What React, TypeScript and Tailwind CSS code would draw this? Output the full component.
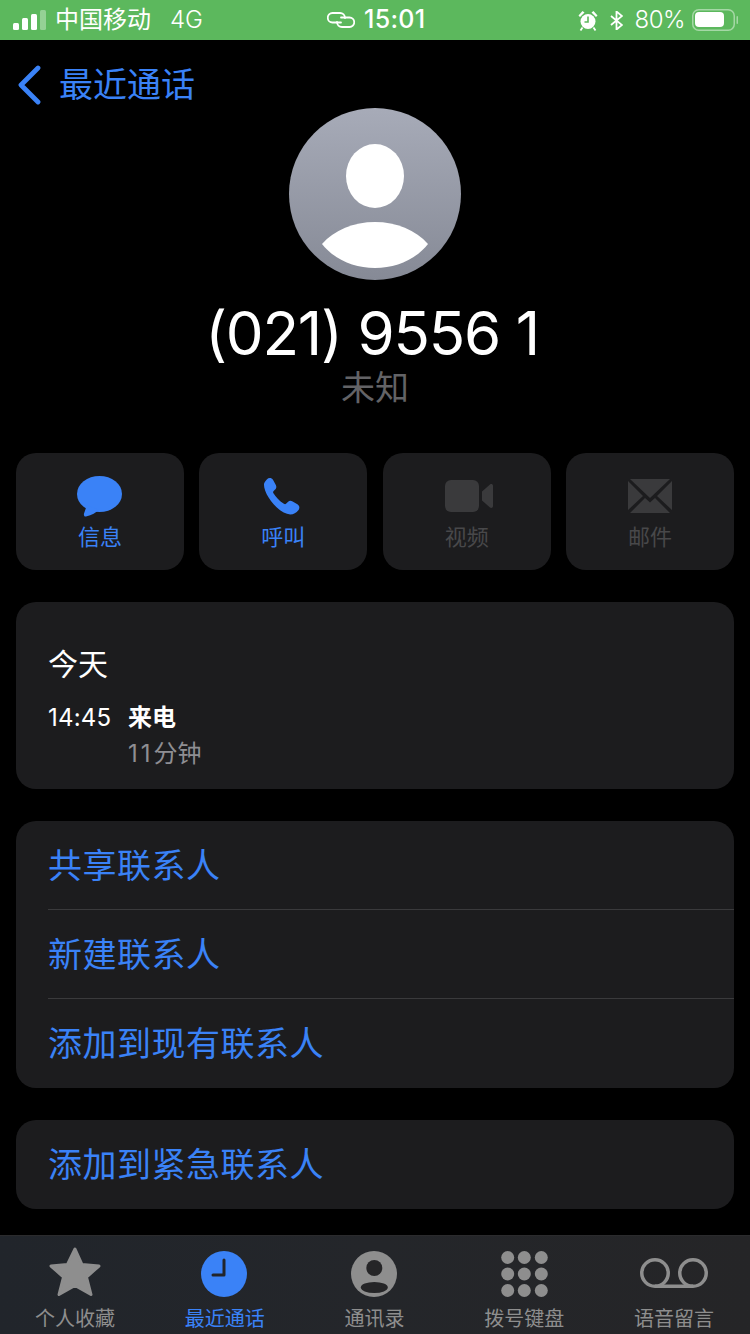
import React from "react";

const font = { fontFamily: '"Inter","Noto Sans CJK SC",sans-serif' };

function Signal() {
  return (
    <svg width="33" height="20" viewBox="0 0 33 20">
      <rect x="0" y="13" width="6" height="7" rx="1.5" fill="#fff" />
      <rect x="9" y="8" width="6" height="12" rx="1.5" fill="#fff" />
      <rect x="18" y="4" width="6" height="16" rx="1.5" fill="#fff" />
      <rect x="27" y="0" width="6" height="20" rx="1.5" fill="#fff" fillOpacity="0.35" />
    </svg>
  );
}

function Link() {
  return (
    <svg width="28" height="16" viewBox="0 0 28 16" fill="none" stroke="#fff" strokeWidth="1.8" strokeLinecap="round">
      <path d="M14 10.5H5.5a4.75 4.75 0 0 1 0-9.500H13a5 5 0 0 1 5 5" />
      <path d="M14 5.500H22.500a4.75 4.75 0 0 1 0 9.500H15a5 5 0 0 1-5-5" />
    </svg>
  );
}

function Alarm() {
  return (
    <svg width="20" height="21" viewBox="0 0 20 21">
      <circle cx="10" cy="11.500" r="7.500" fill="#fff" />
      <path d="M0.500 5.500l4-4.500 2 1.500-4.500 4.500zM19.500 5.500l-4-4.500-2 1.500 4.500 4.500z" fill="#fff" />
      <path d="M10 6.500V12H6.500" stroke="#5cb85d" strokeWidth="1.600" fill="none" />
      <path d="M4.500 17.500l-2 3M15.500 17.500l2 3" stroke="#fff" strokeWidth="1.800" />
    </svg>
  );
}

function Bluetooth() {
  return (
    <svg width="13" height="19" viewBox="0 0 13 19" fill="none" stroke="#fff" strokeWidth="1.800">
      <path d="M1 5l11 9-5.500 4.500V.500L12 5 1 14" />
    </svg>
  );
}

function Battery() {
  return (
    <svg width="46" height="22" viewBox="0 0 46 22">
      <rect x="0.750" y="0.750" width="41.500" height="20.500" rx="6" fill="none" stroke="#fff" strokeOpacity="0.45" strokeWidth="1.500" />
      <rect x="3" y="3" width="29" height="15" rx="4" fill="#fff" />
      <rect x="44.500" y="7" width="1.500" height="8" rx="0.750" fill="#fff" fillOpacity="0.45" />
    </svg>
  );
}

function ActionCard({ label, active, children }: { label: string; active?: boolean; children: React.ReactNode }) {
  return (
    <div className="w-[168px] h-[117px] rounded-[20px] bg-[#1c1c1e] flex flex-col items-center pt-[22px]">
      <div className="h-[42px] w-full flex items-center justify-center">{children}</div>
      <div className={`mt-[5px] text-[22px] leading-[30px] ${active ? "text-[#3a82f7]" : "text-[#48484a]"}`}>{label}</div>
    </div>
  );
}

function Row({ label, border }: { label: string; border?: boolean }) {
  return (
    <div className="pl-[32px] h-[89px] flex flex-col">
      <div className={`flex-1 flex items-center text-[34px] tracking-[0.5px] text-[#3a82f7] ${border ? "border-b border-[#3a3a3c]" : ""}`}>
        {label}
      </div>
    </div>
  );
}

function Tab({ label, active, children }: { label: string; active?: boolean; children: React.ReactNode }) {
  return (
    <div className="flex-1 flex flex-col items-center">
      <div className="h-[61px] flex items-end justify-center">{children}</div>
      <div className={`mt-[9px] text-[20px] leading-[26px] ${active ? "text-[#3a82f7]" : "text-[#8e8e8e]"}`}>{label}</div>
    </div>
  );
}

export default function App() {
  return (
    <div className="w-[750px] h-[1334px] bg-black flex flex-col overflow-hidden" style={font}>
      <div className="h-[40px] bg-[#5cb85d] text-white flex items-center pl-[13px] pr-[12px] shrink-0">
        <div className="flex items-center w-[301px]">
          <Signal />
          <span className="ml-[9px] text-[24px]">中国移动</span>
          <span className="ml-[19px] text-[24px] font-light">4G</span>
        </div>
        <div className="flex items-center ml-[13px] gap-[9px]">
          <Link />
          <span className="text-[25px] font-medium tracking-[0.3px]">15:01</span>
        </div>
        <div className="flex items-center ml-auto">
          <Alarm />
          <span className="w-[12px]" />
          <Bluetooth />
          <span className="ml-[12px] text-[24px] font-light tracking-[-0.5px]">80%</span>
          <span className="w-[7px]" />
          <Battery />
        </div>
      </div>

      <div className="h-[68px] flex items-center pl-[17px] pt-[21px] shrink-0">
        <svg width="26" height="40" viewBox="0 0 26 40" fill="none" stroke="#3a82f7" strokeWidth="4.800" strokeLinecap="round" strokeLinejoin="round">
          <path d="M21 3L4 20l17 17" />
        </svg>
        <span className="ml-[16px] text-[34px] text-[#3a82f7]">最近通话</span>
      </div>

      <div className="flex flex-col items-center">
        <div className="w-[172px] h-[172px] rounded-full bg-gradient-to-b from-[#a7abb8] to-[#868a96] overflow-hidden">
          <svg width="172" height="172" viewBox="0 0 172 172">
            <ellipse cx="86" cy="68" rx="29" ry="32" fill="#fff" />
            <path d="M33 136c12-14 32-22 53-22s41 8 53 22c-13 16-32 24-53 24s-40-8-53-24z" fill="#fff" />
          </svg>
        </div>
        <div className="mt-[15px] pr-[6px] text-[60px] leading-[76px] text-white font-normal tracking-[-1.2px]">(021) 9556 1</div>
        <div className="mt-[-5px] text-[34px] leading-[44px] text-[#636366]">未知</div>
      </div>

      <div className="mt-[43px] px-[16px] flex justify-between">
        <ActionCard label="信息" active>
          <svg className="mr-[2px]" width="45" height="41" viewBox="0 0 45 41" fill="#3a82f7">
            <ellipse cx="22.500" cy="18" rx="22.500" ry="18" />
            <path d="M10 29l-3 8.500c-.5 2 .5 3.500 2 3 6-1.500 10-4 13-6.500z" />
          </svg>
        </ActionCard>
        <ActionCard label="呼叫" active>
          <svg className="mr-[2px]" width="38" height="38" viewBox="0 0 40 40" fill="#3a82f7">
            <path d="M4 2.500C6 .5 9 .5 10.500 3l3 5.500c1 2 .5 3.500-1 5l-1.500 1.500c-.5.6-.5 1.200 0 2.200 2.500 4 6 8 11 11 1 .5 1.600.5 2.200-.1l2-1.900c1.500-1.400 3-1.600 5-.5l5 3c2.300 1.400 2.800 4 1 6.300-2 2.500-5 4.500-8.500 4.500C16 38.500 1 19 1 8c0-2 1.500-4 3-5.500z" />
          </svg>
        </ActionCard>
        <ActionCard label="视频">
          <svg className="ml-[4px]" width="48" height="32" viewBox="0 0 48 32" fill="#3a3a3c">
            <rect x="0" y="0" width="34" height="32" rx="6" />
            <path d="M37 11.500l8-7c1-.8 3-.5 3 1.500v20c0 2-2 2.300-3 1.500l-8-7z" />
          </svg>
        </ActionCard>
        <ActionCard label="邮件">
          <svg width="44" height="34" viewBox="0 0 44 34" fill="#3a3a3c">
            <path d="M2 0h40L22 19z" />
            <path d="M0 2v29l15-14zM44 2v29L29 17z" />
            <path d="M2 34h40L27 19l-5 4.500-5-4.500z" />
          </svg>
        </ActionCard>
      </div>

      <div className="mt-[32px] mx-[16px] h-[187px] rounded-[20px] bg-[#1c1c1e] pl-[32px] flex flex-col">
        <div className="mt-[42px] text-[30px] leading-[40px] text-white">今天</div>
        <div className="mt-[19px] flex items-center h-[30px]">
          <span className="text-[24px] text-white w-[80px] tracking-[0.2px]">14:45</span>
          <span className="text-[24px] text-white font-semibold">来电</span>
        </div>
        <div className="mt-[6px] pl-[80px] text-[24px] leading-[30px] text-[#8e8e93]">
          <span className="tracking-[3px]">11</span>分钟
        </div>
      </div>

      <div className="mt-[32px] mx-[16px] rounded-[20px] bg-[#1c1c1e] overflow-hidden">
        <Row label="共享联系人" border />
        <Row label="新建联系人" border />
        <Row label="添加到现有联系人" />
      </div>

      <div className="mt-[32px] mx-[16px] rounded-[20px] bg-[#1c1c1e] overflow-hidden">
        <Row label="添加到紧急联系人" />
      </div>

      <div className="mt-[26px] flex-1 bg-gradient-to-r from-[#21252b] via-[#24262a] to-[#252527] border-t border-[#2b2b2d] flex pr-[1px]">
        <Tab label="个人收藏">
          <svg width="52" height="50" viewBox="0 0 52 50" fill="#8e8e8e" stroke="#8e8e8e" strokeWidth="3" strokeLinejoin="round">
            <path d="M26 2l7 15.500 17 1.500-12.500 11 4.500 17.500L26 38.500 10 47.500 14.500 30 2 19l16.500-1.500z" />
          </svg>
        </Tab>
        <Tab label="最近通话" active>
          <svg className="mr-[2px]" width="46" height="46" viewBox="0 0 46 46">
            <circle cx="23" cy="23" r="23" fill="#3a82f7" />
            <path d="M23 9v15H12" fill="none" stroke="#22252b" strokeWidth="3" strokeLinecap="round" strokeLinejoin="round" />
          </svg>
        </Tab>
        <Tab label="通讯录">
          <svg width="46" height="46" viewBox="0 0 46 46">
            <circle cx="23" cy="23" r="23" fill="#8e8e8e" />
            <circle cx="23.300" cy="17" r="8" fill="#252527" />
            <ellipse cx="23.300" cy="36.500" rx="13.500" ry="5.500" fill="#252527" />
          </svg>
        </Tab>
        <Tab label="拨号键盘">
          <svg width="47" height="46" viewBox="0 0 47 46" fill="#8e8e8e">
            {[6.500, 23, 39.500].map((cy) =>
              [6.700, 23.300, 40.300].map((cx) => <circle key={`${cx}-${cy}`} cx={cx} cy={cy} r="6.500" />)
            )}
          </svg>
        </Tab>
        <Tab label="语音留言">
          <svg className="mb-[9px]" width="68" height="30" viewBox="0 0 68 30" fill="none" stroke="#8e8e8e" strokeWidth="3.500">
            <circle cx="15" cy="15" r="13.250" />
            <circle cx="53" cy="15" r="13.250" />
            <path d="M15 28.250h38" />
          </svg>
        </Tab>
      </div>
    </div>
  );
}
